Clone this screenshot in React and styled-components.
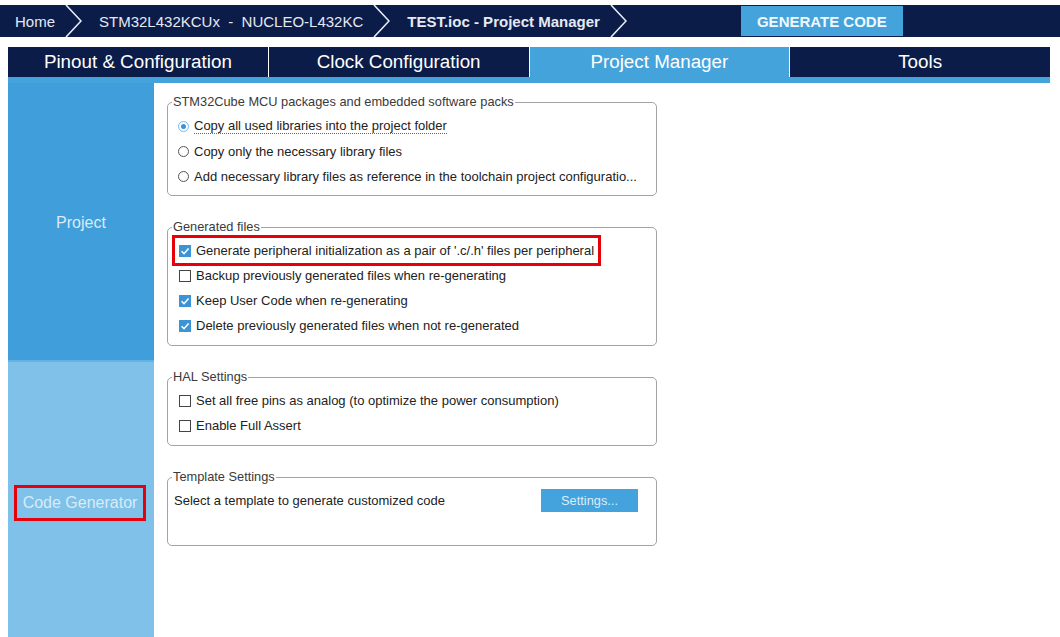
import React from "react";
import styled, { createGlobalStyle } from "styled-components";

const GlobalStyle = createGlobalStyle`
  html, body {
    margin: 0;
    padding: 0;
    background: #fff;
    font-family: "Liberation Sans", Arial, sans-serif;
  }
`;

const Chevron = () => (
  <ChevronSvg viewBox="0 0 17 32" width="17" height="32">
    <polyline points="1,0 16,16 1,32" fill="none" stroke="#e8ecf4" strokeWidth="1.6" />
  </ChevronSvg>
);

const tabs = ["Pinout & Configuration", "Clock Configuration", "Project Manager", "Tools"];

const Radio = ({ on }) => <RadioMark on={on ? 1 : 0} />;

const Check = ({ on }) => (
  <CheckMark on={on ? 1 : 0}>
    {on && (
      <svg viewBox="0 0 12 12" width="12" height="12">
        <polyline points="2.6,6.3 5,8.7 9.6,3.4" fill="none" stroke="#fff" strokeWidth="1.6" />
      </svg>
    )}
  </CheckMark>
);

const App = () => {
  return (
    <Page>
      <GlobalStyle />
      <TopBar>
        <Crumb first>Home</Crumb>
        <Chevron />
        <Crumb>{"STM32L432KCUx  -  NUCLEO-L432KC"}</Crumb>
        <Chevron />
        <Crumb bold>TEST.ioc - Project Manager</Crumb>
        <Chevron />
        <GenerateButton>GENERATE CODE</GenerateButton>
      </TopBar>

      <TabBar>
        {tabs.map((t) => (
          <Tab key={t} active={t === "Project Manager" ? 1 : 0}>
            {t}
          </Tab>
        ))}
      </TabBar>

      <Main>
        <Sidebar>
          <SideItem size="277px" tone="#409fdb">
            <SideLabel>Project</SideLabel>
          </SideItem>
          <SideItem tone="#7fc1e9" grow>
            <RedFrame>Code Generator</RedFrame>
          </SideItem>
        </Sidebar>

        <Content>
          <Group first>
            <Legend>STM32Cube MCU packages and embedded software packs</Legend>
            <Row>
              <Radio on />
              <Focused>Copy all used libraries into the project folder</Focused>
            </Row>
            <Row>
              <Radio />
              Copy only the necessary library files
            </Row>
            <Row>
              <Radio />
              Add necessary library files as reference in the toolchain project configuratio...
            </Row>
          </Group>

          <Group>
            <Legend>Generated files</Legend>
            <Row highlight>
              <Check on />
              Generate peripheral initialization as a pair of '.c/.h' files per peripheral
            </Row>
            <Row>
              <Check />
              Backup previously generated files when re-generating
            </Row>
            <Row>
              <Check on />
              Keep User Code when re-generating
            </Row>
            <Row>
              <Check on />
              Delete previously generated files when not re-generated
            </Row>
          </Group>

          <Group>
            <Legend>HAL Settings</Legend>
            <Row>
              <Check />
              Set all free pins as analog (to optimize the power consumption)
            </Row>
            <Row>
              <Check />
              Enable Full Assert
            </Row>
          </Group>

          <Group tall>
            <Legend>Template Settings</Legend>
            <TemplateRow>
              Select a template to generate customized code
              <SettingsButton>Settings...</SettingsButton>
            </TemplateRow>
          </Group>
        </Content>
      </Main>
    </Page>
  );
};

const Page = styled.div`
  height: 100vh;
  display: flex;
  flex-direction: column;
  overflow: hidden;
`;

const TopBar = styled.div`
  margin-top: 5px;
  height: 32px;
  background: #0b1c49;
  display: flex;
  align-items: center;
  flex-shrink: 0;
`;

const Crumb = styled.span`
  color: #e6e9f0;
  font-size: 15px;
  font-weight: ${(p) => (p.bold ? 700 : 400)};
  white-space: pre;
  padding-left: ${(p) => (p.first ? "15px" : "0")};
`;

const ChevronSvg = styled.svg`
  display: block;
  margin: 0 17px 0 10px;
  flex-shrink: 0;
`;

const GenerateButton = styled.div`
  margin-left: 97px;
  width: 162px;
  height: 30px;
  background: #45a3dc;
  color: #f2f8fd;
  font-size: 15px;
  font-weight: 700;
  display: flex;
  align-items: center;
  justify-content: center;
`;

const TabBar = styled.div`
  margin: 10px 10px 0 8px;
  height: 30px;
  display: flex;
  flex-shrink: 0;
`;

const Tab = styled.div`
  flex: 1;
  background: ${(p) => (p.active ? "#45a3dc" : "#0b1c49")};
  color: #fff;
  font-size: 18.8px;
  display: flex;
  align-items: center;
  justify-content: center;
  & + & {
    border-left: 1px solid #fff;
  }
`;

const Main = styled.div`
  flex: 1;
  margin: 0 10px 0 8px;
  border-top: 6px solid #45a3dc;
  display: flex;
  min-height: 0;
`;

const Sidebar = styled.div`
  width: 146px;
  display: flex;
  flex-direction: column;
  flex-shrink: 0;
`;

const SideItem = styled.div`
  height: ${(p) => p.size || "auto"};
  flex: ${(p) => (p.grow ? 1 : "none")};
  background: ${(p) => p.tone};
  color: #d8ebf8;
  font-size: 16px;
  display: flex;
  align-items: center;
  justify-content: center;
  & + & {
    border-top: 2px solid #62b2e4;
  }
`;

const SideLabel = styled.span`
  margin-top: 3px;
`;

const RedFrame = styled.span`
  border: 3px solid #e6000a;
  height: 30px;
  padding: 0 5px;
  width: 116px;
  display: flex;
  align-items: center;
  justify-content: center;
  margin: 6px 2px 0 0;
`;

const Content = styled.div`
  flex: 1;
  padding: 12px 0 0 13px;
  display: flex;
  flex-direction: column;
  gap: 24px;
`;

const Group = styled.fieldset`
  margin: 0;
  width: 490px;
  box-sizing: border-box;
  min-width: 0;
  border: 1px solid #a3a3a3;
  border-radius: 5px;
  padding: ${(p) => (p.first ? "5px" : "4px")} 11px
    ${(p) => (p.tall ? "32px" : p.first ? "6px" : "7px")} 11px;
`;

const Legend = styled.legend`
  font-size: 12.8px;
  line-height: 14px;
  color: #3a3a3a;
  padding: 0 1px;
  margin-left: -7px;
`;

const Row = styled.div`
  height: 25px;
  display: flex;
  align-items: center;
  gap: 5px;
  width: fit-content;
  font-size: 13px;
  color: #222;
  white-space: nowrap;
  box-sizing: border-box;
  ${(p) =>
    p.highlight &&
    `
    outline: 3px solid #e6000a;
    padding: 0 4px 0 4px;
    margin-left: -4px;
  `}
`;

const Focused = styled.span`
  border-bottom: 1px dotted #666;
  line-height: 14px;
`;

const RadioMark = styled.span`
  width: 11px;
  height: 11px;
  border-radius: 50%;
  border: 1px solid ${(p) => (p.on ? "#78b9e6" : "#555")};
  box-sizing: border-box;
  display: flex;
  align-items: center;
  justify-content: center;
  background: #fff;
  flex-shrink: 0;
  margin-left: -1px;
  &::after {
    content: "";
    width: 5px;
    height: 5px;
    border-radius: 50%;
    background: ${(p) => (p.on ? "#3a94d6" : "transparent")};
  }
`;

const CheckMark = styled.span`
  width: 12px;
  height: 12px;
  box-sizing: border-box;
  border: 1px solid ${(p) => (p.on ? "#3a94d6" : "#444")};
  background: ${(p) => (p.on ? "#3a94d6" : "#fff")};
  display: flex;
  flex-shrink: 0;
  svg {
    margin: -1px;
  }
`;

const TemplateRow = styled.div`
  height: 25px;
  display: flex;
  align-items: center;
  font-size: 13px;
  color: #222;
  padding: 0 7px 0 0;
  margin-left: -5px;
`;

const SettingsButton = styled.div`
  margin-left: auto;
  width: 97px;
  height: 23px;
  background: #44a2dc;
  color: #dcedf9;
  font-size: 12.8px;
  display: flex;
  align-items: center;
  justify-content: center;
`;

export default App;
